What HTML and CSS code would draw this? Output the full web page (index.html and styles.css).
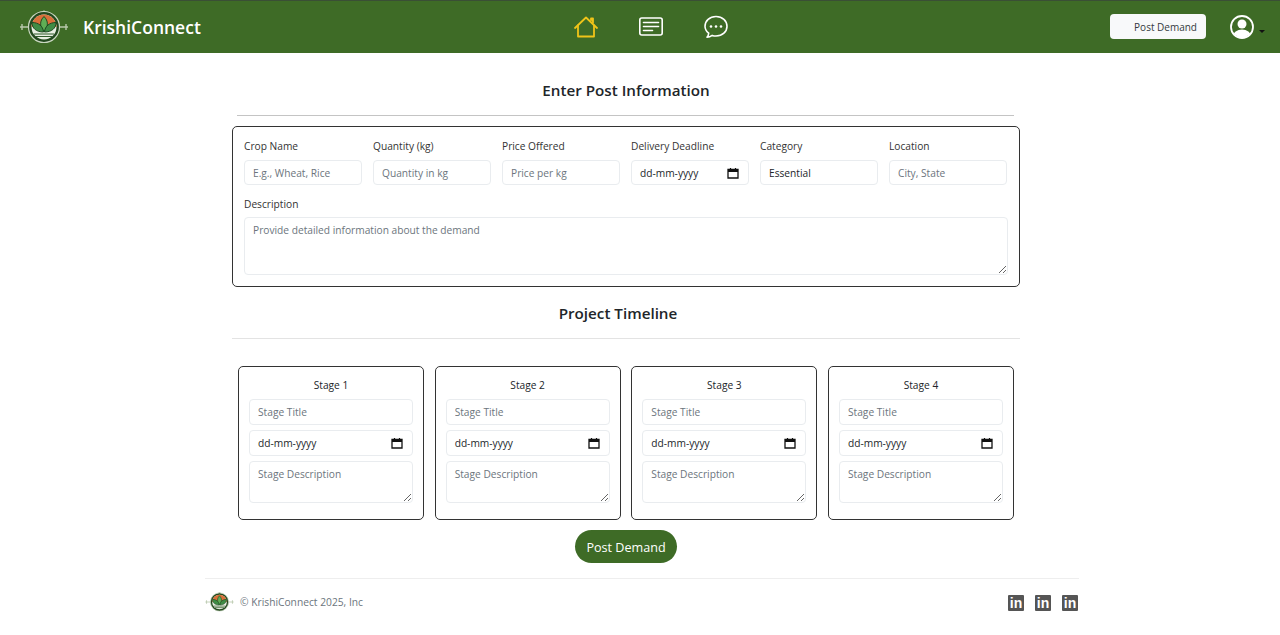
FILE: index.html
```html
<!DOCTYPE html>
<html lang="en">
<head>
    <meta charset="UTF-8">
    <meta name="viewport" content="width=device-width, initial-scale=1.0">
    <title>KrishiConnect - Post Demand</title>
    <link rel="stylesheet" href="styles.css">
</head>
<body>
    <svg class="sprites">
        <symbol id="logo" viewBox="0 0 48 34">
            <path d="M0 17h9M39 17h9M2 14v6M46 14v6" stroke="#b8c8ac" stroke-width="1.400"/>
            <circle cx="24" cy="3" r="2" fill="#3e6b26" stroke="#c9d6c0"/>
            <circle cx="24" cy="17" r="15.500" fill="#23491f" stroke="#c9d6c0" stroke-width="1.200"/>
            <circle cx="24" cy="17" r="12.500" fill="#e8eee2"/>
            <path d="M11.500 17a12.500 12.500 0 0 1 25 0z" fill="#d9703a"/>
            <path d="M24 6.500c4.500 4.500 4.500 10 0 15c-4.500-5-4.500-10.500 0-15z" fill="#5fae55" stroke="#1f4a22"/>
            <path d="M12 12.500c6.500 0 11 3.500 11.500 9.500c-7 0-11.500-3.500-11.500-9.500z" fill="#3f8c45" stroke="#1f4a22"/>
            <path d="M36 12.500c-6.500 0-11 3.500-11.500 9.500c7 0 11.500-3.500 11.500-9.500z" fill="#3f8c45" stroke="#1f4a22"/>
            <path d="M14 24h20M16 26.500h16" stroke="#2f5a2a" stroke-width="1.100"/>
        </symbol>
        <symbol id="calendar" viewBox="0 0 12 12">
            <path d="M1 2.500h10v8.500H1z" fill="none" stroke="#111" stroke-width="1.300"/>
            <path d="M1 2h10v3H1z" fill="#111"/>
            <path d="M3.500 1v2M8.500 1v2" stroke="#111" stroke-width="1.200"/>
        </symbol>
    </svg>

    <header class="navbar">
        <div class="brand">
            <svg class="brand-logo"><use href="#logo"/></svg>
            <span class="brand-name">KrishiConnect</span>
        </div>
        <nav class="nav-icons">
            <svg class="nav-icon" viewBox="0 0 24 24" fill="none" stroke="#f0c419" stroke-width="1.800" stroke-linejoin="round" stroke-linecap="round">
                <path d="M1 13L12 2.500L23 13"/>
                <path d="M4 10.500V21.500H20V10.500"/>
                <path d="M17 5V3.500h2v4" fill="#f0c419"/>
            </svg>
            <svg class="nav-icon" viewBox="0 0 24 24" fill="none" stroke="#fff" stroke-width="1.600" stroke-linecap="round">
                <rect x="0.800" y="3" width="22.400" height="17" rx="2"/>
                <path d="M4.500 7.500h15M4.500 11.500h15M4.500 15.500h9"/>
            </svg>
            <svg class="nav-icon" viewBox="0 0 24 24" fill="none" stroke="#fff" stroke-width="1.600" stroke-linejoin="round">
                <path d="M12 1.500c6.400 0 11 4.300 11 9.800s-4.600 9.700-11 9.700c-1.300 0-2.600-.2-3.800-.6-1.400 1-3 1.800-5.200 1.900 1-1.200 1.600-2.600 1.700-4.100C2.400 16.400 1 14 1 11.300 1 5.800 5.600 1.500 12 1.500z"/>
                <circle cx="7" cy="11.500" r="1.300" fill="#fff" stroke="none"/>
                <circle cx="12" cy="11.500" r="1.300" fill="#fff" stroke="none"/>
                <circle cx="17" cy="11.500" r="1.300" fill="#fff" stroke="none"/>
            </svg>
        </nav>
        <div class="nav-right">
            <button class="nav-btn">Post Demand</button>
            <svg class="avatar" viewBox="0 0 24 24">
                <defs><clipPath id="avatarClip"><circle cx="12" cy="12" r="10.500"/></clipPath></defs>
                <circle cx="12" cy="12" r="11" fill="none" stroke="#fff" stroke-width="1.800"/>
                <circle cx="12" cy="9" r="4.500" fill="#fff"/>
                <ellipse cx="12" cy="21" rx="9" ry="6.500" fill="#fff" clip-path="url(#avatarClip)"/>
            </svg>
            <span class="caret"></span>
        </div>
    </header>

    <main class="page">
        <h2 class="section-title">Enter Post Information</h2>
        <hr class="rule rule-post">

        <section class="post-box">
            <div class="field-row">
                <div class="field">
                    <label>Crop Name</label>
                    <input type="text" placeholder="E.g., Wheat, Rice">
                </div>
                <div class="field">
                    <label>Quantity (kg)</label>
                    <input type="text" placeholder="Quantity in kg">
                </div>
                <div class="field">
                    <label>Price Offered</label>
                    <input type="text" placeholder="Price per kg">
                </div>
                <div class="field">
                    <label>Delivery Deadline</label>
                    <div class="date-input">dd-mm-yyyy<svg class="date-icon"><use href="#calendar"/></svg></div>
                </div>
                <div class="field">
                    <label>Category</label>
                    <input type="text" value="Essential">
                </div>
                <div class="field">
                    <label>Location</label>
                    <input type="text" placeholder="City, State">
                </div>
            </div>
            <div class="field desc-field">
                <label>Description</label>
                <textarea class="desc-input" placeholder="Provide detailed information about the demand"></textarea>
            </div>
        </section>

        <h2 class="section-title timeline-title">Project Timeline</h2>
        <hr class="rule rule-timeline">

        <section class="stages">
            <div class="stage">
                <p class="stage-name">Stage 1</p>
                <input type="text" placeholder="Stage Title">
                <div class="date-input">dd-mm-yyyy<svg class="date-icon"><use href="#calendar"/></svg></div>
                <textarea placeholder="Stage Description"></textarea>
            </div>
            <div class="stage">
                <p class="stage-name">Stage 2</p>
                <input type="text" placeholder="Stage Title">
                <div class="date-input">dd-mm-yyyy<svg class="date-icon"><use href="#calendar"/></svg></div>
                <textarea placeholder="Stage Description"></textarea>
            </div>
            <div class="stage">
                <p class="stage-name">Stage 3</p>
                <input type="text" placeholder="Stage Title">
                <div class="date-input">dd-mm-yyyy<svg class="date-icon"><use href="#calendar"/></svg></div>
                <textarea placeholder="Stage Description"></textarea>
            </div>
            <div class="stage">
                <p class="stage-name">Stage 4</p>
                <input type="text" placeholder="Stage Title">
                <div class="date-input">dd-mm-yyyy<svg class="date-icon"><use href="#calendar"/></svg></div>
                <textarea placeholder="Stage Description"></textarea>
            </div>
        </section>

        <div class="submit-row">
            <button class="submit-btn">Post Demand</button>
        </div>
    </main>

    <footer class="footer">
        <div class="footer-left">
            <svg class="footer-logo"><use href="#logo"/></svg>
            <span>© KrishiConnect 2025, Inc</span>
        </div>
        <div class="socials">
            <span class="social">in</span>
            <span class="social">in</span>
            <span class="social">in</span>
        </div>
    </footer>
</body>
</html>
```

FILE: styles.css
```css
* {
    box-sizing: border-box;
}
html, body {
    height: 100%;
}
body {
    margin: 0;
    font-family: "Open Sans", "Noto Sans", sans-serif;
    color: #212529;
    background: #fff;
    overflow: hidden;
}
.sprites {
    display: none;
}

/* navbar */
.navbar {
    height: 53px;
    display: flex;
    align-items: center;
    background: #3e6b26;
    border-top: 1px solid #3a4f35;
    padding: 0 15px 0 20px;
}
.brand {
    display: flex;
    align-items: center;
    gap: 15px;
}
.brand-logo {
    width: 48px;
    height: 34px;
}
.brand-name {
    color: #fff;
    font-size: 17.500px;
    font-weight: 600;
}
.nav-icons {
    display: flex;
    gap: 41px;
    margin-left: 373px;
}
.nav-icon {
    width: 24px;
    height: 24px;
}
.nav-right {
    display: flex;
    align-items: center;
    margin-left: auto;
}
.nav-btn {
    width: 96px;
    height: 25px;
    margin-bottom: 1px;
    padding: 0 9px 0 0;
    text-align: right;
    font-family: inherit;
    font-size: 10px;
    color: #343a40;
    background: #f8f9fa;
    border: none;
    border-radius: 4px;
}
.avatar {
    width: 24px;
    height: 24px;
    margin-left: 24px;
}
.caret {
    width: 0;
    height: 0;
    margin: 8px 0 0 5px;
    border-top: 3px solid #111;
    border-left: 3px solid transparent;
    border-right: 3px solid transparent;
}

/* main */
.page {
    width: 788px;
    margin-left: 232px;
}
.section-title {
    margin: 0;
    font-size: 15.200px;
    font-weight: 600;
    text-align: center;
    line-height: 22px;
    padding-top: 26px;
}
.rule {
    border: none;
    margin: 14px 0 0;
    height: 1px;
}
.rule-post {
    margin-left: 5px;
    margin-right: 6px;
    background: #c4c4c4;
}
.rule-timeline {
    background: #e3e3e3;
}
.timeline-title {
    padding: 15px 16px 0 0;
}
.post-box {
    margin-top: 10px;
    height: 161px;
    padding: 11px 11px 0;
    border: 1px solid #333;
    border-radius: 5px;
}
.field-row {
    display: grid;
    grid-template-columns: repeat(6, 1fr);
    column-gap: 11px;
    margin: 0 1px 11px 0;
}
.field-row input, .field-row .date-input {
    height: 25px;
}
.field {
    display: flex;
    flex-direction: column;
}
.field label {
    font-size: 10.200px;
    line-height: 16px;
    margin-bottom: 6px;
    color: #333;
}
.desc-field label {
    margin-bottom: 5px;
}
input, textarea, .date-input {
    width: 100%;
    font-family: inherit;
    font-size: 10.200px;
    color: #212529;
    background: #fff;
    border: 1px solid #e9ecef;
    border-radius: 4px;
    padding: 0 8px;
    outline: none;
}
input {
    height: 26px;
}
.date-input {
    height: 26px;
    display: flex;
    align-items: center;
    justify-content: space-between;
}
.date-icon {
    width: 12px;
    height: 12px;
    margin-right: 1px;
}
textarea {
    display: block;
    padding-top: 5px;
}
input::placeholder, textarea::placeholder {
    color: #6c757d;
}
.desc-input {
    height: 58px;
}

/* stages */
.stages {
    display: grid;
    grid-template-columns: repeat(4, 186px);
    justify-content: space-between;
    margin: 27px 6px 0;
}
.stage {
    height: 154px;
    padding: 10px 10px 0;
    display: flex;
    flex-direction: column;
    gap: 5px;
    border: 1px solid #333;
    border-radius: 5px;
}
.stage-name {
    margin: 0 0 1px;
    font-size: 10.200px;
    line-height: 16px;
    text-align: center;
}
.stage textarea {
    height: 42px;
}
.submit-row {
    display: flex;
    justify-content: center;
    margin-top: 10px;
}
.submit-btn {
    width: 102px;
    height: 33px;
    padding: 1px 0 0;
    font-family: inherit;
    font-size: 12.600px;
    color: #fff;
    background: #3e6b26;
    border: none;
    border-radius: 17px;
}

/* footer */
.footer {
    width: 874px;
    margin: 15px 0 0 205px;
    padding-top: 13px;
    display: flex;
    align-items: center;
    justify-content: space-between;
    border-top: 1px solid #eee;
}
.footer-left {
    display: flex;
    align-items: center;
    gap: 6px;
    font-size: 10.250px;
    color: #6c757d;
}
.footer-logo {
    width: 29px;
    height: 20px;
}
.socials {
    display: flex;
    gap: 11px;
    margin: 2px 1px 0 0;
}
.social {
    width: 16px;
    height: 16px;
    display: flex;
    align-items: center;
    justify-content: center;
    font-family: "Liberation Sans", sans-serif;
    font-size: 14px;
    font-weight: 700;
    color: #fff;
    background: #555;
    border-radius: 1px;
}
```
